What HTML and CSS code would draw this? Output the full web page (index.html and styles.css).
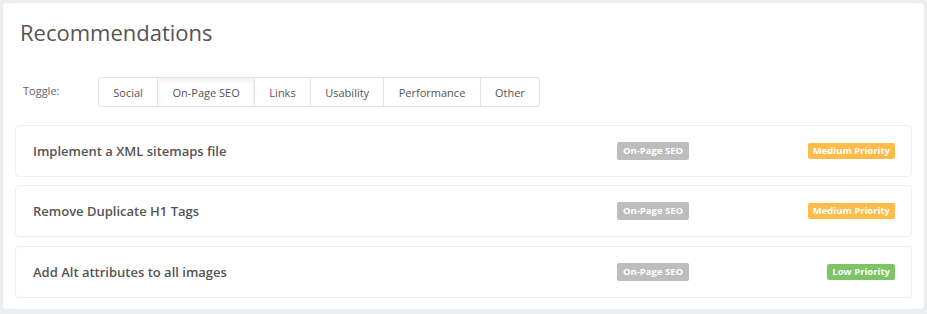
FILE: index.html
```html
<!DOCTYPE html>
<html lang="en">
	<head>
		<meta charset="UTF-8" />
		<meta name="viewport" content="width=device-width, initial-scale=1.0" />
		<title>Recommendations</title>
		<link rel="stylesheet" href="styles.css">
	</head>
	<body>
		<div class="panel">
			<h2 class="panel-title">Recommendations</h2>

			<div class="toggle">
				<span class="toggle-label">Toggle:</span>
				<div class="btn-group">
					<button class="btn">Social</button>
					<button class="btn active">On-Page SEO</button>
					<button class="btn">Links</button>
					<button class="btn">Usability</button>
					<button class="btn">Performance</button>
					<button class="btn">Other</button>
				</div>
			</div>

			<ul class="list">
				<li class="item">
					<span class="item-title">Implement a XML sitemaps file</span>
					<span class="badge badge-cat">On-Page SEO</span>
					<span class="badge badge-medium">Medium Priority</span>
				</li>
				<li class="item">
					<span class="item-title">Remove Duplicate H1 Tags</span>
					<span class="badge badge-cat">On-Page SEO</span>
					<span class="badge badge-medium">Medium Priority</span>
				</li>
				<li class="item">
					<span class="item-title">Add Alt attributes to all images</span>
					<span class="badge badge-cat">On-Page SEO</span>
					<span class="badge badge-low">Low Priority</span>
				</li>
			</ul>
		</div>
	</body>
</html>
```

FILE: styles.css
```css
* {
	box-sizing: border-box;
	margin: 0;
	padding: 0;
	font-family: "Open Sans", Arial, sans-serif;
}

body {
	background-color: #eceef2;
	padding: 3px;
	min-height: 100vh;
}

.panel {
	background: white;
	border-radius: 4px;
	padding: 15px 12px 11px 12px;
	height: 306px;
}

.panel-title {
	font-size: 22px;
	font-weight: 400;
	color: #555;
	margin-left: 5px;
	line-height: 28px;
}

.toggle {
	display: flex;
	align-items: center;
	margin-top: 31px;
	margin-left: 8px;
}

.toggle-label {
	font-size: 11px;
	color: #666;
	width: 75px;
	margin-top: -4px;
}

.btn-group {
	display: flex;
}

.btn {
	background: white;
	border: 1px solid #e3e3e3;
	margin-left: -1px;
	height: 30px;
	padding: 0 14.3px;
	font-size: 11px;
	color: #555;
	cursor: pointer;
}

.btn:first-child {
	margin-left: 0;
	border-radius: 3px 0 0 3px;
}

.btn:last-child {
	border-radius: 0 3px 3px 0;
}

.btn.active {
	box-shadow: inset 0 2px 4px rgba(0, 0, 0, 0.08);
}

.list {
	list-style: none;
	margin-top: 18px;
}

.item {
	display: grid;
	grid-template-columns: 1fr 191px 87px;
	align-items: center;
	height: 52px;
	padding: 0 16px 0 17px;
	margin-bottom: 8px;
	border: 1px solid #eef0f2;
	border-radius: 4px;
}

.item:nth-child(3) {
	margin-top: 9px;
}

.item-title {
	font-size: 13px;
	font-weight: 600;
	color: #555;
}

.badge {
	font-size: 9.5px;
	font-weight: 700;
	color: white;
	white-space: nowrap;
	border-radius: 2px;
	padding: 1px 5px;
	line-height: 14px;
	justify-self: start;
}

.badge-cat {
	background-color: #bdbdbd;
	padding: 2px 6px;
}

.badge-medium {
	background-color: #ffbc4a;
	justify-self: end;
}

.badge-low {
	background-color: #7dc465;
	justify-self: end;
}
```
